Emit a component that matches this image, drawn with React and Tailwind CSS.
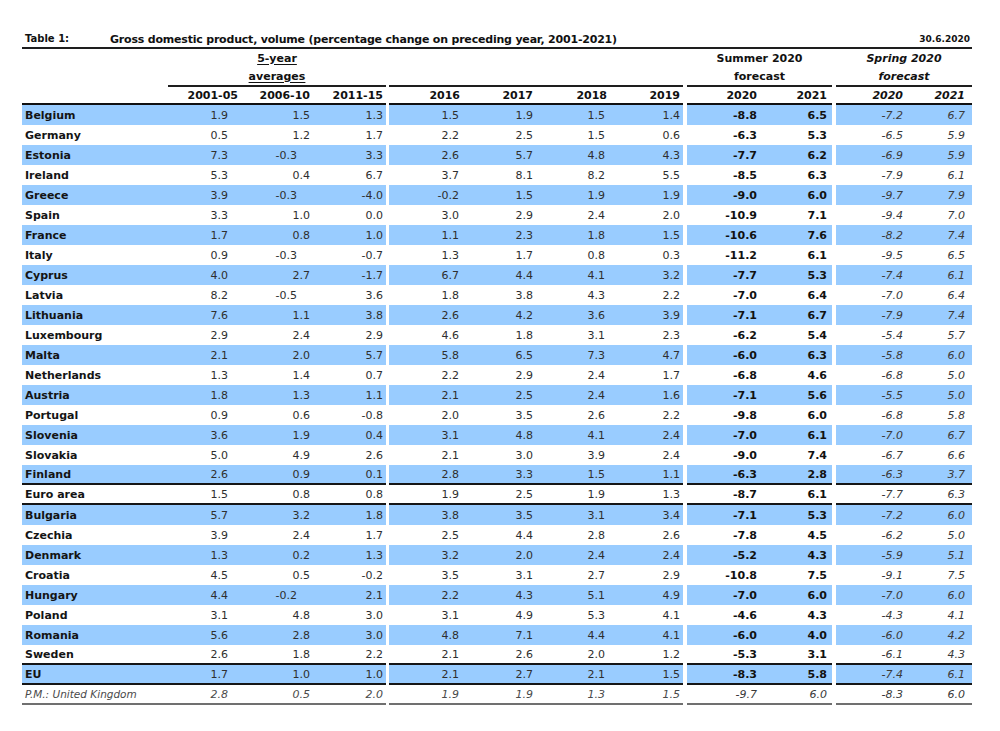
const rows = [
    ['Belgium', ['1.9', '1.5', '1.3', '1.5', '1.9', '1.5', '1.4', '-8.8', '6.5', '-7.2', '6.7']],
    ['Germany', ['0.5', '1.2', '1.7', '2.2', '2.5', '1.5', '0.6', '-6.3', '5.3', '-6.5', '5.9']],
    ['Estonia', ['7.3', '-0.3', '3.3', '2.6', '5.7', '4.8', '4.3', '-7.7', '6.2', '-6.9', '5.9']],
    ['Ireland', ['5.3', '0.4', '6.7', '3.7', '8.1', '8.2', '5.5', '-8.5', '6.3', '-7.9', '6.1']],
    ['Greece', ['3.9', '-0.3', '-4.0', '-0.2', '1.5', '1.9', '1.9', '-9.0', '6.0', '-9.7', '7.9']],
    ['Spain', ['3.3', '1.0', '0.0', '3.0', '2.9', '2.4', '2.0', '-10.9', '7.1', '-9.4', '7.0']],
    ['France', ['1.7', '0.8', '1.0', '1.1', '2.3', '1.8', '1.5', '-10.6', '7.6', '-8.2', '7.4']],
    ['Italy', ['0.9', '-0.3', '-0.7', '1.3', '1.7', '0.8', '0.3', '-11.2', '6.1', '-9.5', '6.5']],
    ['Cyprus', ['4.0', '2.7', '-1.7', '6.7', '4.4', '4.1', '3.2', '-7.7', '5.3', '-7.4', '6.1']],
    ['Latvia', ['8.2', '-0.5', '3.6', '1.8', '3.8', '4.3', '2.2', '-7.0', '6.4', '-7.0', '6.4']],
    ['Lithuania', ['7.6', '1.1', '3.8', '2.6', '4.2', '3.6', '3.9', '-7.1', '6.7', '-7.9', '7.4']],
    ['Luxembourg', ['2.9', '2.4', '2.9', '4.6', '1.8', '3.1', '2.3', '-6.2', '5.4', '-5.4', '5.7']],
    ['Malta', ['2.1', '2.0', '5.7', '5.8', '6.5', '7.3', '4.7', '-6.0', '6.3', '-5.8', '6.0']],
    ['Netherlands', ['1.3', '1.4', '0.7', '2.2', '2.9', '2.4', '1.7', '-6.8', '4.6', '-6.8', '5.0']],
    ['Austria', ['1.8', '1.3', '1.1', '2.1', '2.5', '2.4', '1.6', '-7.1', '5.6', '-5.5', '5.0']],
    ['Portugal', ['0.9', '0.6', '-0.8', '2.0', '3.5', '2.6', '2.2', '-9.8', '6.0', '-6.8', '5.8']],
    ['Slovenia', ['3.6', '1.9', '0.4', '3.1', '4.8', '4.1', '2.4', '-7.0', '6.1', '-7.0', '6.7']],
    ['Slovakia', ['5.0', '4.9', '2.6', '2.1', '3.0', '3.9', '2.4', '-9.0', '7.4', '-6.7', '6.6']],
    ['Finland', ['2.6', '0.9', '0.1', '2.8', '3.3', '1.5', '1.1', '-6.3', '2.8', '-6.3', '3.7'], 'dark'],
    ['Euro area', ['1.5', '0.8', '0.8', '1.9', '2.5', '1.9', '1.3', '-8.7', '6.1', '-7.7', '6.3'], 'dark'],
    ['Bulgaria', ['5.7', '3.2', '1.8', '3.8', '3.5', '3.1', '3.4', '-7.1', '5.3', '-7.2', '6.0']],
    ['Czechia', ['3.9', '2.4', '1.7', '2.5', '4.4', '2.8', '2.6', '-7.8', '4.5', '-6.2', '5.0']],
    ['Denmark', ['1.3', '0.2', '1.3', '3.2', '2.0', '2.4', '2.4', '-5.2', '4.3', '-5.9', '5.1']],
    ['Croatia', ['4.5', '0.5', '-0.2', '3.5', '3.1', '2.7', '2.9', '-10.8', '7.5', '-9.1', '7.5']],
    ['Hungary', ['4.4', '-0.2', '2.1', '2.2', '4.3', '5.1', '4.9', '-7.0', '6.0', '-7.0', '6.0']],
    ['Poland', ['3.1', '4.8', '3.0', '3.1', '4.9', '5.3', '4.1', '-4.6', '4.3', '-4.3', '4.1']],
    ['Romania', ['5.6', '2.8', '3.0', '4.8', '7.1', '4.4', '4.1', '-6.0', '4.0', '-6.0', '4.2']],
    ['Sweden', ['2.6', '1.8', '2.2', '2.1', '2.6', '2.0', '1.2', '-5.3', '3.1', '-6.1', '4.3'], 'dark'],
    ['EU', ['1.7', '1.0', '1.0', '2.1', '2.7', '2.1', '1.5', '-8.3', '5.8', '-7.4', '6.1'], 'dark'],
    ['P.M.: United Kingdom', ['2.8', '0.5', '2.0', '1.9', '1.9', '1.3', '1.5', '-9.7', '6.0', '-8.3', '6.0'], 'gray', true],
];

// column widths + right padding, grouped like the printed table
const groups = [
    { w: 'w-[364px]', cols: [['w-[72px] pr-[12px]', 'w-[72px] pr-[2px]'], ['w-[72px] pr-[2px]', 'w-[72px] pr-[2px]'], ['w-[74px] pr-[3px]', 'w-[74px] pr-[3px]']] },
    { w: 'w-[294px]', cols: [['w-[81px] pr-[11px]', 'w-[81px] pr-[10px]'], ['w-[75px] pr-[12px]', 'w-[75px] pr-[12px]'], ['w-[72px] pr-[12px]', 'w-[72px] pr-[10px]'], ['w-[66px] pr-[3px]', 'w-[66px] pr-[3px]']] },
    { w: 'w-[145px]', cols: [['w-[83px] pr-[13px]', 'w-[83px] pr-[13px]'], ['w-[62px] pr-[5px]', 'w-[62px] pr-[5px]']] },
    { w: 'w-[136px]', cols: [['w-[79px] pr-[12px]', 'w-[79px] pr-[12px]'], ['w-[57px] pr-[7px]', 'w-[57px] pr-[7px]']] },
];

const headers = [['2001-05', '2006-10', '2011-15'], ['2016', '2017', '2018', '2019'], ['2020', '2021'], ['2020', '2021']];

function Gap({ g }) {
    if (g === 0) return null;
    return <div className={g === 1 ? 'w-[3px] shrink-0' : 'w-[4px] shrink-0'} />;
}

function DataRow({ row, index }) {
    const [name, vals, line, pm] = row;
    const bg = index % 2 === 0 ? 'bg-[#99ccff]' : 'bg-white';
    const border = line === 'dark' ? 'border-b-2 border-[#161616]' : line === 'gray' ? 'border-b-2 border-[#707070]' : '';
    let k = 0;

    return (
        <div className="flex h-[20px]">
            {groups.map((grp, g) => (
                <div key={g} className="contents">
                    <Gap g={g} />
                    <div className={`flex shrink-0 ${grp.w} ${bg} ${border}`}>
                        {g === 0 && (
                            <div className={`w-[146px] pl-[3px] flex items-center ${pm ? 'italic text-[#4a4a4a] text-[10.5px]' : 'font-bold text-[#141414]'}`}>
                                {name}
                            </div>
                        )}
                        {grp.cols.map((c, ci) => {
                            const v = vals[k++];
                            let cls = c[0];
                            // the 2006-10 column sets its negatives further left
                            if (g === 0 && ci === 1 && v.startsWith('-')) cls = 'w-[72px] pr-[15px]';
                            let tone = 'text-[#2e2e2e]';
                            if (g === 2) tone = pm ? 'italic text-[#3a3a3a]' : 'font-bold text-[#111]';
                            if (g === 3) tone = 'italic text-[#3a3a3a]';
                            if (pm && g < 2) tone = 'italic text-[#4a4a4a]';
                            return (
                                <div key={ci} className={`${cls} flex items-center justify-end ${tone}`}>
                                    {v}
                                </div>
                            );
                        })}
                    </div>
                </div>
            ))}
        </div>
    );
}

export default function App() {
    return (
        <div className="w-[1000px] h-[731px] bg-white font-['DejaVu_Sans',sans-serif] text-[11px] leading-none text-[#111] pt-[31px]">
            <div className="ml-[22px] w-[950px]">
                {/* Title */}
                <div className="h-[16px] flex items-center font-bold text-[11px]">
                    <span className="pl-[3px] w-[88px] text-[10px]">Table 1:</span>
                    <span className="tracking-[-0.2px]">Gross domestic product, volume (percentage change on preceding year, 2001-2021)</span>
                    <span className="ml-auto pr-[2px] text-[9px]">30.6.2020</span>
                </div>
                <div className="h-[2px] bg-[#1e1e1e]" />

                {/* Group labels */}
                <div className="flex h-[38px] font-bold">
                    <div className="w-[146px] shrink-0" />
                    <div className="w-[218px] shrink-0 flex flex-col items-center border-b-2 border-[#1e1e1e]">
                        <div className="h-[18px] flex items-center underline underline-offset-2">5-year </div>
                        <div className="h-[18px] flex items-center underline underline-offset-2">averages</div>
                    </div>
                    <div className="w-[3px] shrink-0" />
                    <div className="w-[294px] shrink-0 border-b-2 border-[#1e1e1e]" />
                    <div className="w-[4px] shrink-0" />
                    <div className="w-[145px] shrink-0 flex flex-col items-center border-b-2 border-[#1e1e1e]">
                        <div className="h-[18px] flex items-center">Summer 2020</div>
                        <div className="h-[18px] flex items-center">forecast</div>
                    </div>
                    <div className="w-[4px] shrink-0" />
                    <div className="w-[136px] shrink-0 flex flex-col items-center italic border-b-2 border-[#1e1e1e]">
                        <div className="h-[18px] flex items-center">Spring 2020</div>
                        <div className="h-[18px] flex items-center">forecast</div>
                    </div>
                </div>

                {/* Year headers */}
                <div className="flex h-[18px] font-bold">
                    {groups.map((grp, g) => (
                        <div key={g} className="contents">
                            <Gap g={g} />
                            <div className={`flex shrink-0 ${grp.w} border-b-2 border-[#111]`}>
                                {g === 0 && <div className="w-[146px]" />}
                                {grp.cols.map((c, ci) => (
                                    <div key={ci} className={`${c[1]} flex items-center justify-end ${g === 3 ? 'italic' : ''}`}>
                                        {headers[g][ci]}
                                    </div>
                                ))}
                            </div>
                        </div>
                    ))}
                </div>

                {rows.map((row, i) => (
                    <DataRow key={row[0]} row={row} index={i} />
                ))}
            </div>
        </div>
    );
}
